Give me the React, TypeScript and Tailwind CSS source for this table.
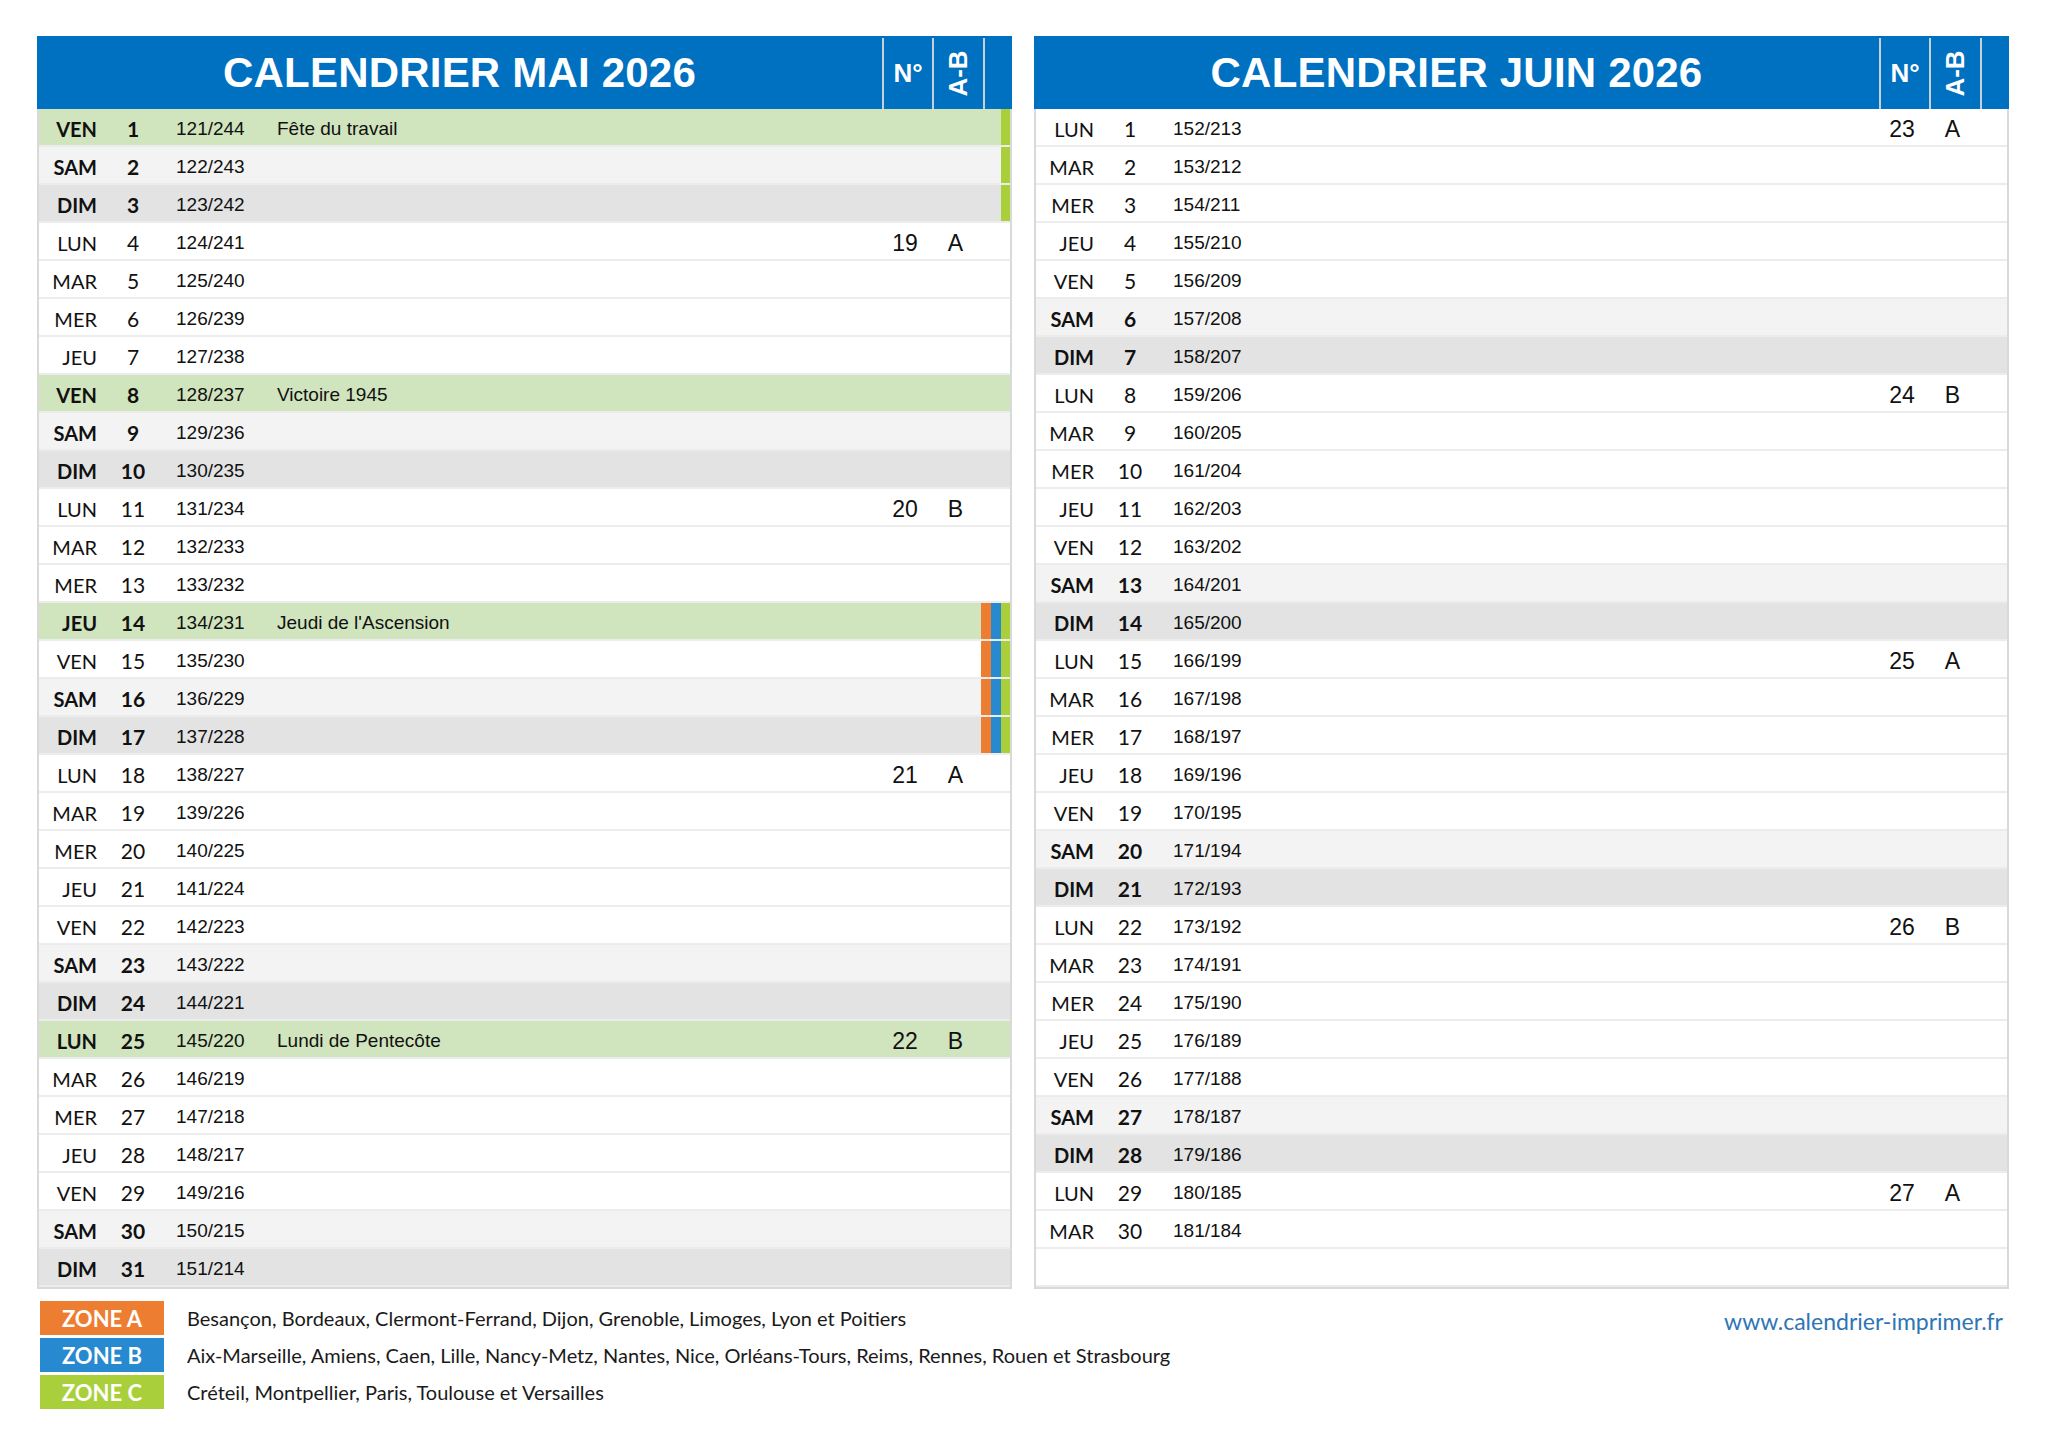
const dayNames = ["DIM", "LUN", "MAR", "MER", "JEU", "VEN", "SAM"];

type Row = {
  label: string;
  num: number;
  yd: string;
  name?: string;
  week?: string;
  ab?: string;
  holiday?: boolean;
  bars?: ("a" | "b" | "c")[];
};

const mayHolidays: Record<number, string> = {
  1: "Fête du travail",
  8: "Victoire 1945",
  14: "Jeudi de l'Ascension",
  25: "Lundi de Pentecôte",
};

function buildMonth(month: number, days: number, firstDoy: number, holidays: Record<number, string>, bars: Record<number, ("a" | "b" | "c")[]>) {
  const rows: Row[] = [];
  for (let d = 1; d <= days; d++) {
    const date = new Date(2026, month, d);
    const dow = date.getDay();
    const doy = firstDoy + d - 1;
    let week: string | undefined;
    let ab: string | undefined;
    if (dow === 1) {
      // ISO week number
      const t = new Date(Date.UTC(2026, month, d));
      t.setUTCDate(t.getUTCDate() + 4 - (t.getUTCDay() || 7));
      const y0 = new Date(Date.UTC(t.getUTCFullYear(), 0, 1));
      const w = Math.ceil(((t.getTime() - y0.getTime()) / 86400000 + 1) / 7);
      week = String(w);
      ab = w % 2 === 1 ? "A" : "B";
    }
    rows.push({
      label: dayNames[dow],
      num: d,
      yd: `${doy}/${365 - doy}`,
      name: holidays[d],
      holiday: !!holidays[d],
      week,
      ab,
      bars: bars[d],
    });
  }
  return rows;
}

const may = buildMonth(4, 31, 121, mayHolidays, {
  1: ["c"],
  2: ["c"],
  3: ["c"],
  14: ["a", "b", "c"],
  15: ["a", "b", "c"],
  16: ["a", "b", "c"],
  17: ["a", "b", "c"],
});
const june = buildMonth(5, 30, 152, {}, {});

function DayRow({ row }: { row: Row | null }) {
  if (!row) {
    return <div className="h-[38px] border-b-2 border-[#ececec] bg-white" />;
  }
  const strong = row.holiday || row.label === "SAM" || row.label === "DIM";
  const bg = row.holiday
    ? "bg-[#d0e4bd]"
    : row.label === "SAM"
      ? "bg-[#f3f3f3]"
      : row.label === "DIM"
        ? "bg-[#e3e3e3]"
        : "bg-white";
  return (
    <div className={`relative flex h-[38px] items-center border-b-2 border-[#ececec] pt-[3px] text-[#111] ${bg}`}>
      <div className={`w-[58px] text-right font-['Lato',sans-serif] text-[20px] ${strong ? "font-bold" : ""}`}>{row.label}</div>
      <div className={`w-[72px] text-center font-['Lato',sans-serif] text-[21px] ${strong ? "font-bold" : ""}`}>{row.num}</div>
      <div className="w-[101px] pl-[7px] pt-[2px] font-['Liberation_Sans',Arial,sans-serif] text-[19px]">{row.yd}</div>
      <div className="flex-1 pl-[7px] pt-[2px] font-['Liberation_Sans',Arial,sans-serif] text-[19px]">{row.name}</div>
      <div className="w-[50px] pt-[1px] text-center font-['Liberation_Sans',Arial,sans-serif] text-[23px]">{row.week}</div>
      <div className="w-[51px] pt-[1px] text-center font-['Liberation_Sans',Arial,sans-serif] text-[23px]">{row.ab}</div>
      <div className="w-[29px]" />
      <div className="absolute right-0 top-0 flex h-full w-[29px]">
        <div className={`w-[10px] ${row.bars?.includes("a") ? "bg-[#ed7d31]" : ""}`} />
        <div className={`w-[10px] ${row.bars?.includes("b") ? "bg-[#2789d0]" : ""}`} />
        <div className={`w-[9px] ${row.bars?.includes("c") ? "bg-[#a9d03a]" : ""}`} />
      </div>
    </div>
  );
}

function MonthPanel({ title, rows }: { title: string; rows: (Row | null)[] }) {
  return (
    <div className="w-[975px]">
      <div className="flex h-[73px] bg-[#0070c0] font-['Liberation_Sans',Arial,sans-serif] font-bold text-white">
        <div className="flex flex-1 items-center justify-center text-[42px] tracking-[0.2px]">{title}</div>
        <div className="mt-[2px] flex w-[50px] items-center justify-center border-l-2 border-[#c7cfd8] text-[26px]">N°</div>
        <div className="mt-[2px] flex w-[51px] items-center justify-center border-l-2 border-[#c7cfd8] text-[26px]">
          <span className="inline-block -rotate-90 whitespace-nowrap">A-B</span>
        </div>
        <div className="mt-[2px] w-[29px] border-l-2 border-[#c7cfd8]" />
      </div>
      <div className="border-x-2 border-b-2 border-[#d9d9d9]">
        {rows.map((r, i) => (
          <DayRow key={i} row={r} />
        ))}
      </div>
    </div>
  );
}

const zones = [
  { name: "ZONE A", bg: "bg-[#ed7d31]", text: "Besançon, Bordeaux, Clermont-Ferrand, Dijon, Grenoble, Limoges, Lyon et Poitiers" },
  { name: "ZONE B", bg: "bg-[#2789d0]", text: "Aix-Marseille, Amiens, Caen, Lille, Nancy-Metz, Nantes, Nice, Orléans-Tours, Reims, Rennes, Rouen et Strasbourg" },
  { name: "ZONE C", bg: "bg-[#a9d03a]", text: "Créteil, Montpellier, Paris, Toulouse et Versailles" },
];

export default function App() {
  return (
    <div className="h-[1448px] w-[2048px] bg-white pl-[37px] pt-[36px]">
      <div className="flex gap-[22px]">
        <MonthPanel title="CALENDRIER MAI 2026" rows={may} />
        <MonthPanel title="CALENDRIER JUIN 2026" rows={[...june, null]} />
      </div>
      <div className="mt-[12px] flex w-[1972px] items-start justify-between font-['Lato',sans-serif]">
        <div className="flex flex-col gap-[3px] pl-[3px]">
          {zones.map((z) => (
            <div key={z.name} className="flex items-center">
              <div className={`flex h-[34px] w-[124px] items-center justify-center text-[22px] font-bold text-white ${z.bg}`}>{z.name}</div>
              <div className="pl-[23px] text-[20px] text-[#1a1a1a]">{z.text}</div>
            </div>
          ))}
        </div>
        <div className="pr-[6px] pt-[3px] text-[23px] text-[#2e75b6]">www.calendrier-imprimer.fr</div>
      </div>
    </div>
  );
}
